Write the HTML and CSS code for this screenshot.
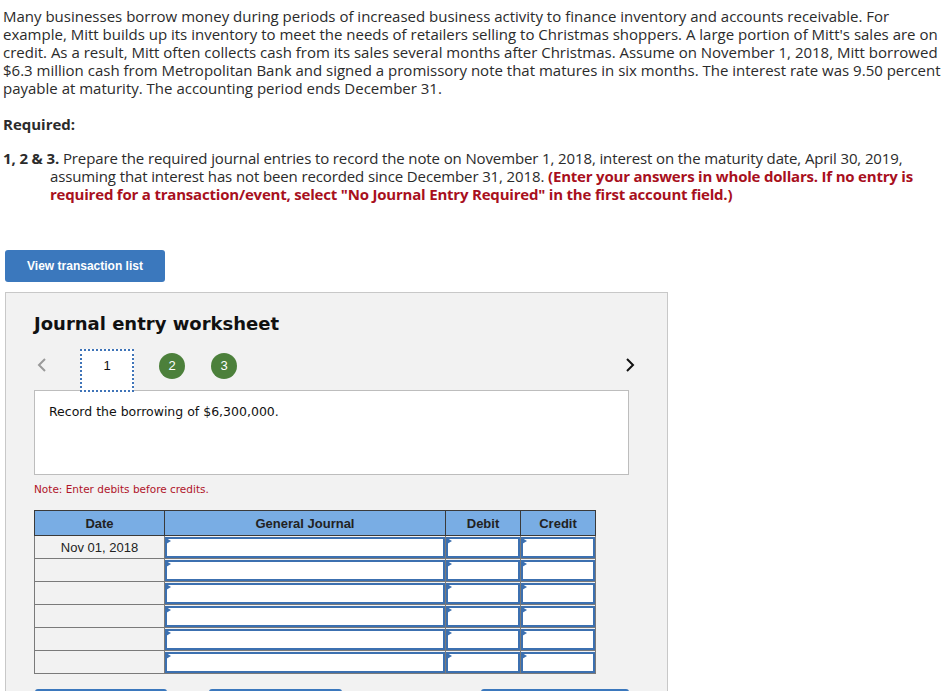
FILE: index.html
```html
<!DOCTYPE html>
<html lang="en">
<head>
  <meta charset="UTF-8">
  <title>Journal Entry Worksheet</title>
  <link rel="stylesheet" href="styles.css">
</head>
<body>
  <p class="intro">Many businesses borrow money during periods of increased business activity to finance inventory and accounts receivable. For example, Mitt builds up its inventory to meet the needs of retailers selling to Christmas shoppers. A large portion of Mitt's sales are on credit. As a result, Mitt often collects cash from its sales several months after Christmas. Assume on November 1, 2018, Mitt borrowed $6.3 million cash from Metropolitan Bank and signed a promissory note that matures in six months. The interest rate was 9.50 percent payable at maturity. The accounting period ends December 31.</p>

  <p class="required">Required:</p>

  <p class="question"><strong>1, 2 &amp; 3.</strong> Prepare the required journal entries to record the note on November 1, 2018, interest on the maturity date, April 30, 2019, assuming that interest has not been recorded since December 31, 2018. <span class="hint">(Enter your answers in whole dollars. If no entry is required for a transaction/event, select "No Journal Entry Required" in the first account field.)</span></p>

  <button class="btn-list">View transaction list</button>

  <div class="worksheet">
    <h2>Journal entry worksheet</h2>

    <div class="steps">
      <span class="arrow prev">
        <svg width="10" height="14" viewBox="0 0 10 14"><path d="M8 1 L2 7 L8 13" fill="none" stroke="#9a9a9a" stroke-width="2"/></svg>
      </span>
      <span class="tab">1</span>
      <span class="dot">2</span>
      <span class="dot">3</span>
      <span class="arrow next">
        <svg width="10" height="14" viewBox="0 0 10 14"><path d="M2 1 L8 7 L2 13" fill="none" stroke="#111" stroke-width="2"/></svg>
      </span>
    </div>

    <div class="desc">Record the borrowing of $6,300,000.</div>

    <p class="note">Note: Enter debits before credits.</p>

    <table class="journal">
      <thead>
        <tr>
          <th class="c-date">Date</th>
          <th class="c-acct">General Journal</th>
          <th class="c-num">Debit</th>
          <th class="c-num">Credit</th>
        </tr>
      </thead>
      <tbody id="rows"></tbody>
    </table>

    <div class="actions">
      <button class="btn-a">Record entry</button>
      <button class="btn-b">Clear entry</button>
      <button class="btn-c">View general journal</button>
    </div>
  </div>

  <script>
    const rows = document.getElementById('rows');
    for (let i = 0; i < 6; i++) {
      const tr = document.createElement('tr');
      tr.innerHTML = `
        <td class="date">${i === 0 ? 'Nov 01, 2018' : ''}</td>
        <td class="cell"><div class="field"></div></td>
        <td class="cell"><div class="field"></div></td>
        <td class="cell"><div class="field"></div></td>
      `;
      rows.appendChild(tr);
    }
  </script>
</body>
</html>
```

FILE: styles.css
```css
body {
  margin: 0 3px;
  font-family: "Open Sans", Lato, sans-serif;
  color: #2b2b2b;
  background: #fff;
}

p {
  margin: 0;
  font-size: 15px;
  line-height: 18px;
}

.intro {
  padding-top: 7px;
}

.required {
  margin-top: 18px;
  font-weight: bold;
}

.question {
  margin-top: 16px;
  padding-left: 47px;
  text-indent: -47px;
  letter-spacing: -0.12px;
}

.question strong {
  font-weight: bold;
}

.hint {
  color: #a8101d;
  font-weight: bold;
  letter-spacing: -0.2px;
}

.btn-list {
  display: block;
  margin: 47px 0 0 2px;
  width: 160px;
  height: 32px;
  border: none;
  border-radius: 3px;
  background: #3b78bd;
  color: #fff;
  font-family: "Liberation Sans", Arial, sans-serif;
  font-size: 12px;
  font-weight: bold;
}

/* Worksheet panel */
.worksheet {
  margin: 10px 0 0 2px;
  width: 663px;
  box-sizing: border-box;
  border: 1px solid #c8c8c8;
  background: #f2f2f2;
  padding: 19px 38px 0 28px;
  height: 420px;
  overflow: hidden;
}

.worksheet h2 {
  margin: 0;
  font-family: "DejaVu Sans", Verdana, sans-serif;
  font-size: 18px;
  line-height: 24px;
  font-weight: bold;
  color: #111;
}

.steps {
  display: flex;
  align-items: center;
  height: 43px;
  margin-top: 13px;
  position: relative;
  z-index: 1;
}

.arrow {
  display: flex;
  width: 10px;
  margin-bottom: 12px;
}

.prev {
  margin-left: 3px;
}

.next {
  margin-left: auto;
  margin-right: -6px;
}

.tab {
  margin-left: 33px;
  width: 54px;
  height: 43px;
  box-sizing: border-box;
  border: 2px dotted #3f74b8;
  background: #fff;
  display: flex;
  align-items: center;
  justify-content: center;
  font-family: "Liberation Sans", Arial, sans-serif;
  font-size: 13px;
  color: #111;
  padding-bottom: 10px;
}

.dot {
  width: 26px;
  height: 26px;
  border-radius: 50%;
  background: #4c803b;
  color: #fff;
  display: flex;
  align-items: center;
  justify-content: center;
  font-family: "Liberation Sans", Arial, sans-serif;
  font-size: 13px;
  margin-left: 25px;
  margin-bottom: 10px;
}

.dot + .dot {
  margin-left: 26px;
}

.desc {
  margin-top: -2px;
  height: 85px;
  box-sizing: border-box;
  border: 1px solid #bdbdbd;
  background: #fff;
  padding: 13px 14px;
  font-family: "DejaVu Sans", Verdana, sans-serif;
  font-size: 12.5px;
  color: #111;
}

.note {
  margin-top: 7px;
  font-family: "DejaVu Sans", Verdana, sans-serif;
  font-size: 10.5px;
  line-height: 14px;
  color: #b0142a;
}

/* Journal table */
.journal {
  margin-top: 14px;
  border-collapse: collapse;
  font-family: "Liberation Sans", Arial, sans-serif;
  font-size: 13px;
}

.journal th {
  height: 25px;
  padding: 0;
  background: #79ade4;
  border: 1px solid #3a3a3a;
  font-weight: bold;
  color: #222;
  box-sizing: border-box;
}

.c-date { width: 130px; }
.c-acct { width: 281px; }
.c-num { width: 75px; }

.journal td {
  height: 23px;
  padding: 0;
  box-sizing: border-box;
}

.journal td.date {
  border: 1px solid #7a7a7a;
  text-align: center;
  color: #222;
}

.journal td.cell {
  border: 1px solid #7a7a7a;
}

.field {
  position: relative;
  height: 21px;
  box-sizing: border-box;
  border: 2px solid #3c70b0;
  background: #fff;
}

.field::before {
  content: "";
  position: absolute;
  top: -1px;
  left: -1px;
  border-left: 5px solid #3c70b0;
  border-top: 3px solid transparent;
  border-bottom: 3px solid transparent;
}

.actions {
  display: flex;
  margin-top: 15px;
}

.actions button {
  height: 32px;
  border: none;
  border-radius: 3px;
  background: #3b78bd;
  color: #fff;
  font-family: "Liberation Sans", Arial, sans-serif;
  font-size: 12px;
  font-weight: bold;
}

.btn-a { width: 138px; margin-left: 1px; }
.btn-b { width: 138px; margin-left: 42px; }
.btn-c { width: 155px; margin-left: 139px; }
```
